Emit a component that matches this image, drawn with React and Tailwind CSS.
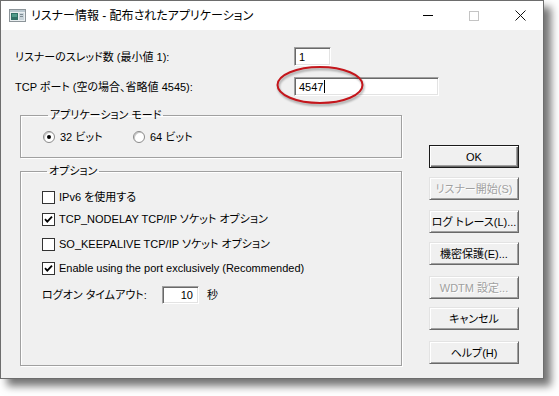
import React from 'react';

const FONT = "font-['Liberation_Sans','Noto_Sans_CJK_JP',sans-serif] [font-feature-settings:'palt']";

const RAISED =
  'border border-t-[#e3e3e3] border-l-[#e3e3e3] border-b-[#696969] border-r-[#696969] shadow-[inset_1px_1px_0_#fff,inset_-1px_-1px_0_#a0a0a0]';
const SUNKEN =
  'border border-t-[#a0a0a0] border-l-[#a0a0a0] border-b-white border-r-white shadow-[inset_1px_1px_0_#696969,inset_-1px_-1px_0_#e3e3e3] bg-white';
const ETCHED =
  'border border-[#a0a0a0] shadow-[inset_1px_1px_0_#fff,1px_1px_0_#fff]';

const BUTTONS = [
  { label: 'OK', def: true, mt: '' },
  { label: 'リスナー開始(S)', disabled: true, mt: 'mt-[9px]' },
  { label: 'ログ トレース(L)...', mt: 'mt-[10px]' },
  { label: '機密保護(E)...', mt: 'mt-[9px]' },
  { label: 'WDTM 設定...', disabled: true, mt: 'mt-[11px]' },
  { label: 'キャンセル', mt: 'mt-[8px]' },
  { label: 'ヘルプ(H)', mt: 'mt-[11px]' },
];

function Check({ checked }) {
  return (
    <div className="w-[13px] h-[13px] border border-[#333] bg-white flex items-center justify-center flex-shrink-0">
      {checked && (
        <svg width="9" height="9" viewBox="0 0 9 9">
          <path d="M1 4.2 L3.3 6.6 L8 1.6" fill="none" stroke="#000" strokeWidth="1.8" />
        </svg>
      )}
    </div>
  );
}

function Radio({ on }) {
  return (
    <div className="w-[12px] h-[12px] rounded-full border border-[#8a8a8a] bg-white flex items-center justify-center shadow-[inset_1px_1px_0_#c8c8c8] flex-shrink-0">
      {on && <div className="w-[4px] h-[4px] rounded-full bg-black" />}
    </div>
  );
}

function Btn({ label, def, disabled, mt }) {
  return (
    <div
      className={`${mt} h-[23px] w-[90px] flex items-center justify-center bg-[#f0f0f0] text-[11px] leading-[14px] ${
        def
          ? 'border border-[#1a1a1a] shadow-[inset_1px_1px_0_#fff,inset_-1px_-1px_0_#696969,inset_-2px_-2px_0_#a0a0a0]'
          : RAISED
      } ${disabled ? 'text-[#a0a0a0] [text-shadow:1px_1px_0_#fff]' : 'text-black'}`}
    >
      {label}
    </div>
  );
}

function CheckRow({ checked, label, mt }) {
  return (
    <div className={`${mt} h-[14px] flex items-center gap-[4px]`}>
      <Check checked={checked} />
      <span className="leading-[14px] whitespace-nowrap">{label}</span>
    </div>
  );
}

export default function App() {
  return (
    <div className={`w-[559px] h-[396px] bg-white relative overflow-hidden text-[11px] text-black ${FONT}`}>
      <div className="w-[544px] h-[379px] border border-[#6d6d6d] bg-[#f0f0f0] shadow-[7px_7px_8px_rgba(0,0,0,0.55)] flex flex-col relative">
        {/* title bar */}
        <div className="h-[29px] bg-white flex items-center flex-shrink-0">
          <svg className="ml-[8px]" width="17" height="13" viewBox="0 0 17 13">
            <rect x="0.5" y="0.5" width="16" height="12" fill="#e9eef0" stroke="#8c9499" />
            <rect x="1" y="1" width="15" height="2" fill="#b9c7cf" />
            <rect x="2" y="4" width="7" height="7" fill="#2f6f66" />
            <rect x="3" y="5" width="5" height="3" fill="#4f9a8a" />
            <rect x="10" y="4" width="5" height="7" fill="#c9d4da" />
            <rect x="11" y="5" width="3" height="1" fill="#7f8c94" />
            <rect x="11" y="7" width="3" height="1" fill="#7f8c94" />
          </svg>
          <span className="ml-[5px] text-[12px] leading-[16px]">リスナー情報 - 配布されたアプリケーション</span>
          <div className="ml-auto flex h-full">
            <div className="w-[46px] flex items-center justify-center">
              <div className="w-[10px] h-[1px] bg-black" />
            </div>
            <div className="w-[46px] flex items-center justify-center">
              <div className="w-[10px] h-[10px] border border-[#c4c4c4]" />
            </div>
            <div className="w-[46px] flex items-center justify-center">
              <svg width="11" height="11" viewBox="0 0 11 11">
                <path d="M0.5 0.5 L10.5 10.5 M10.5 0.5 L0.5 10.5" stroke="#111" strokeWidth="1" />
              </svg>
            </div>
          </div>
        </div>

        {/* body */}
        <div className="flex-1 flex flex-col pl-[14px] pt-[17px]">
          <div className="h-[19px] flex items-center">
            <span className="w-[279px] flex-shrink-0 leading-[14px]">リスナーのスレッド数 (最小値 1):</span>
            <div className={`w-[37px] h-[19px] flex-shrink-0 ${SUNKEN} flex items-center pl-[4px] leading-[14px]`}>1</div>
          </div>
          <div className="mt-[11px] h-[19px] flex items-center">
            <span className="w-[279px] flex-shrink-0 leading-[14px]">TCP ポート (空の場合、省略値 4545):</span>
            <div className={`w-[145px] h-[19px] flex-shrink-0 ${SUNKEN} flex items-center pl-[4px] leading-[14px]`}>
              4547<span className="ml-[1px] w-[1px] h-[13px] bg-black" />
            </div>
          </div>

          <div className="mt-[12px] flex">
            <div className="w-[387px] flex flex-col">
              <fieldset className={`ml-[5px] w-[382px] h-[50px] ${ETCHED} pt-[8px] pl-[22px]`}>
                <legend className="ml-[5px] px-[2px] leading-[14px]">アプリケーション モード</legend>
                <div className="h-[14px] flex items-center">
                  <div className="w-[90px] flex items-center gap-[5px]">
                    <Radio on />
                    <span className="leading-[14px]">32 ビット</span>
                  </div>
                  <div className="flex items-center gap-[5px]">
                    <Radio />
                    <span className="leading-[14px]">64 ビット</span>
                  </div>
                </div>
              </fieldset>

              <fieldset className={`mt-[6px] ml-[5px] w-[382px] h-[202px] ${ETCHED} pt-[12px] pl-[21px]`}>
                <legend className="ml-[5px] px-[2px] leading-[14px]">オプション</legend>
                <CheckRow label="IPv6 を使用する" mt="" />
                <CheckRow checked label="TCP_NODELAY TCP/IP ソケット オプション" mt="mt-[8px]" />
                <CheckRow label="SO_KEEPALIVE TCP/IP ソケット オプション" mt="mt-[11px]" />
                <CheckRow checked label="Enable using the port exclusively (Recommended)" mt="mt-[10px]" />
                <div className="mt-[11px] h-[18px] flex items-center">
                  <span className="w-[120px] leading-[14px]">ログオン タイムアウト:</span>
                  <div className={`w-[37px] h-[18px] ${SUNKEN} flex items-center justify-end pr-[5px] leading-[14px]`}>10</div>
                  <span className="ml-[8px] leading-[14px]">秒</span>
                </div>
              </fieldset>
            </div>

            <div className="ml-[27px] pt-[37px] flex flex-col">
              {BUTTONS.map((b) => (
                <Btn key={b.label} {...b} />
              ))}
            </div>
          </div>
        </div>

        {/* highlight around the port field */}
        <svg
          className="absolute left-[273px] top-[61px] drop-shadow-[1px_2px_1px_rgba(0,0,0,0.35)]"
          width="94"
          height="46"
          viewBox="0 0 94 46"
        >
          <ellipse cx="46" cy="23" rx="42.5" ry="18" fill="none" stroke="#c4161c" strokeWidth="2" />
        </svg>
      </div>
    </div>
  );
}
